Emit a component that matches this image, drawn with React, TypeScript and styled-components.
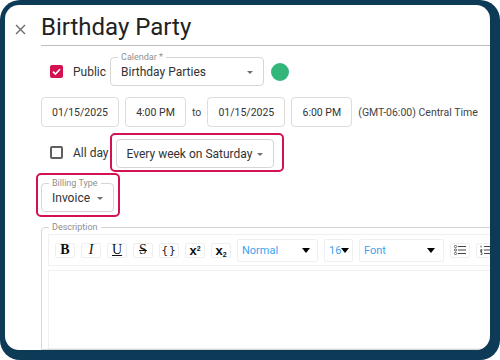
import React from 'react'
import styled, { createGlobalStyle } from 'styled-components'

const GlobalStyle = createGlobalStyle`
  html, body {
    margin: 0;
    padding: 0;
    background: #fff;
  }
  body {
    font-family: Roboto, "Liberation Sans", Arial, sans-serif;
  }
  * {
    box-sizing: border-box;
  }
`

const Frame = styled.div`
  width: 500px;
  height: 360px;
  background: #0d3a57;
  border-radius: 20px;
  padding: 5px 10px 10px 5px;
`

const Panel = styled.div`
  height: 100%;
  background: #fff;
  border-radius: 14px;
  overflow: hidden;
  display: flex;
`

const Side = styled.div`
  width: 36px;
  flex-shrink: 0;
  padding: 18px 0 0 10px;
`

const CloseButton = styled.button`
  display: block;
  width: 11px;
  height: 11px;
  padding: 0;
  border: 0;
  background: none;
  color: #6b6b6b;
  cursor: pointer;
`

const Content = styled.div`
  width: 480px;
  flex-shrink: 0;
  display: flex;
  flex-direction: column;
`

const Title = styled.h1`
  margin: 0;
  padding: 8px 0 4px;
  font-size: 24px;
  line-height: 28px;
  font-weight: 400;
  color: #222;
  border-bottom: 1px solid #bdbdbd;
`

const Row = styled.div<{ $top: number; $gap?: number }>`
  display: flex;
  align-items: center;
  gap: ${p => p.$gap ?? 0}px;
  margin-top: ${p => p.$top}px;
`

const CheckLabel = styled.label`
  display: flex;
  align-items: center;
  gap: 10px;
  padding-left: 9px;
  font-size: 12px;
  color: #333;
`

const Check = styled.span<{ $checked?: boolean }>`
  width: 13px;
  height: 13px;
  border-radius: 2px;
  display: flex;
  align-items: center;
  justify-content: center;
  background: ${p => (p.$checked ? '#d3124f' : '#fff')};
  border: ${p => (p.$checked ? 'none' : '2px solid #5f5f5f')};
`

const Select = styled.div<{ $width: number }>`
  position: relative;
  width: ${p => p.$width}px;
  height: 29px;
  padding: 0 10px;
  border: 1px solid #d6d6d6;
  border-radius: 4px;
  background: #fff;
  display: flex;
  align-items: center;
  justify-content: space-between;
  font-size: 12px;
  color: #333;
  flex-shrink: 0;
`

const FloatLabel = styled.span`
  position: absolute;
  left: 7px;
  top: -7px;
  padding: 0 3px;
  background: #fff;
  font-size: 9px;
  line-height: 12px;
  color: #8f8f8f;
`

const Caret = styled.span`
  width: 0;
  height: 0;
  margin-top: 1px;
  border-left: 3px solid transparent;
  border-right: 3px solid transparent;
  border-top: 3px solid #6f6f6f;
`

const ColorDot = styled.span<{ $color: string }>`
  width: 18px;
  height: 18px;
  margin-left: 7px;
  border-radius: 50%;
  background: ${p => p.$color};
`

const Field = styled.div<{ $width: number }>`
  width: ${p => p.$width}px;
  height: 30px;
  border: 1px solid #dcdcdc;
  border-radius: 4px;
  display: flex;
  align-items: center;
  justify-content: center;
  font-size: 10.5px;
  color: #333;
  flex-shrink: 0;
`

const PlainText = styled.span`
  font-size: 10.5px;
  color: #444;
  white-space: nowrap;
`

const Highlight = styled.div<{ $pad: string; $shift?: number }>`
  padding: ${p => p.$pad};
  margin-left: ${p => p.$shift ?? 0}px;
  border: 2px solid #d3124f;
  border-radius: 5px;
  align-self: flex-start;
`

const Description = styled.div`
  position: relative;
  height: 200px;
  margin-top: 10px;
  padding: 6px 0 0 6px;
  border: 1px solid #d6d6d6;
  border-radius: 4px 0 0 0;
  display: flex;
  flex-direction: column;
`

const Toolbar = styled.div`
  height: 32px;
  padding: 0 6px;
  border: 1px solid #f0f0f0;
  display: flex;
  align-items: center;
  gap: 6px;
`

const ToolButton = styled.span`
  width: 20px;
  height: 15px;
  flex-shrink: 0;
  border: 1px solid #efefef;
  border-radius: 2px;
  background: #fff;
  display: flex;
  align-items: center;
  justify-content: center;
  overflow: hidden;
`

const SerifGlyph = styled.span<{ $bold?: boolean; $italic?: boolean; $line?: string }>`
  font-family: "Liberation Serif", "Times New Roman", serif;
  font-size: 14px;
  line-height: 1;
  color: #111;
  font-weight: ${p => (p.$bold ? 700 : 400)};
  font-style: ${p => (p.$italic ? 'italic' : 'normal')};
  text-decoration: ${p => p.$line ?? 'none'};
  text-decoration-thickness: 1px;
`

const ScriptGlyph = styled.span`
  font-family: "Liberation Sans", Arial, sans-serif;
  font-size: 13px;
  font-weight: 700;
  line-height: 1;
  color: #111;
`

const Small = styled.span<{ $up?: boolean }>`
  font-size: 7px;
  position: relative;
  top: ${p => (p.$up ? -4 : 2)}px;
`

const Braces = styled.span`
  font-family: "DejaVu Sans Mono", monospace;
  font-size: 11px;
  line-height: 1;
  color: #222;
  letter-spacing: 1px;
`

const Dropdown = styled.span<{ $width: number; $padRight: number }>`
  width: ${p => p.$width}px;
  height: 23px;
  flex-shrink: 0;
  padding: 0 ${p => p.$padRight}px 0 4px;
  border: 1px solid #f0f0f0;
  border-radius: 2px;
  display: flex;
  align-items: center;
  justify-content: space-between;
  font-size: 11px;
  color: #3ba3ef;
`

const DropCaret = styled.span`
  width: 0;
  height: 0;
  border-left: 4px solid transparent;
  border-right: 4px solid transparent;
  border-top: 5px solid #000;
`

const Editor = styled.div`
  flex: 1;
  margin-top: 4px;
  border: 1px solid #f0f0f0;
`

const CloseIcon = () => (
  <svg width="11" height="11" viewBox="0 0 11 11">
    <path d="M1 1 L10 10 M10 1 L1 10" stroke="currentColor" strokeWidth="1.4" fill="none" />
  </svg>
)

const CheckMark = () => (
  <svg width="11" height="11" viewBox="0 0 11 11">
    <path d="M2 5.6 L4.4 8 L9 3.2" stroke="#fff" strokeWidth="1.6" fill="none" />
  </svg>
)

const BulletIcon = () => (
  <svg width="12" height="10" viewBox="0 0 12 10">
    <circle cx="1.5" cy="1.5" r="1.1" fill="none" stroke="#444" strokeWidth="0.8" />
    <circle cx="1.5" cy="5" r="1.1" fill="none" stroke="#444" strokeWidth="0.8" />
    <circle cx="1.5" cy="8.5" r="1.1" fill="none" stroke="#444" strokeWidth="0.8" />
    <path d="M4 1.5 H12 M4 5 H12 M4 8.5 H12" stroke="#444" strokeWidth="1" />
  </svg>
)

const NumberIcon = () => (
  <svg width="12" height="10" viewBox="0 0 12 10">
    <path d="M1 0.5 V2.5 M0.5 4.5 H2 V5.5 H0.5 V6.5 H2 M0.5 7.5 H2 V9.5 H0.5" stroke="#444" strokeWidth="0.8" fill="none" />
    <path d="M4 1.5 H12 M4 5 H12 M4 8.5 H12" stroke="#444" strokeWidth="1" />
  </svg>
)

const App = () => {
  return (
    <Frame>
      <GlobalStyle />
      <Panel>
        <Side>
          <CloseButton aria-label="Close">
            <CloseIcon />
          </CloseButton>
        </Side>
        <Content>
          <Title>Birthday Party</Title>

          <Row $top={11}>
            <CheckLabel>
              <Check $checked>
                <CheckMark />
              </Check>
              Public
            </CheckLabel>
            <Select $width={154} style={{ marginLeft: 4 }}>
              <FloatLabel>Calendar *</FloatLabel>
              Birthday Parties
              <Caret />
            </Select>
            <ColorDot $color="#33b679" />
          </Row>

          <Row $top={11} $gap={6}>
            <Field $width={78}>01/15/2025</Field>
            <Field $width={61}>4:00 PM</Field>
            <PlainText>to</PlainText>
            <Field $width={78}>01/15/2025</Field>
            <Field $width={61}>6:00 PM</Field>
            <PlainText>(GMT-06:00) Central Time</PlainText>
          </Row>

          <Row $top={6}>
            <CheckLabel>
              <Check />
              All day
            </CheckLabel>
            <Highlight $pad="4px 8px 2px 4px" $shift={1}>
              <Select $width={158}>
                Every week on Saturday
                <Caret />
              </Select>
            </Highlight>
          </Row>

          <Row $top={1}>
            <Highlight $pad="8px 4px 3px 3px" $shift={-5}>
              <Select $width={73}>
                <FloatLabel>Billing Type</FloatLabel>
                Invoice
                <Caret />
              </Select>
            </Highlight>
          </Row>

          <Description>
            <FloatLabel>Description</FloatLabel>
            <Toolbar>
              <ToolButton><SerifGlyph $bold>B</SerifGlyph></ToolButton>
              <ToolButton><SerifGlyph $italic>I</SerifGlyph></ToolButton>
              <ToolButton><SerifGlyph $line="underline">U</SerifGlyph></ToolButton>
              <ToolButton><SerifGlyph $line="line-through">S</SerifGlyph></ToolButton>
              <ToolButton><Braces>{'{}'}</Braces></ToolButton>
              <ToolButton><ScriptGlyph>x<Small $up>2</Small></ScriptGlyph></ToolButton>
              <ToolButton><ScriptGlyph>x<Small>2</Small></ScriptGlyph></ToolButton>
              <Dropdown $width={81} $padRight={7}>Normal<DropCaret /></Dropdown>
              <Dropdown $width={29} $padRight={3}>16<DropCaret /></Dropdown>
              <Dropdown $width={85} $padRight={8}>Font<DropCaret /></Dropdown>
              <ToolButton><BulletIcon /></ToolButton>
              <ToolButton><NumberIcon /></ToolButton>
            </Toolbar>
            <Editor />
          </Description>
        </Content>
      </Panel>
    </Frame>
  )
}

export default App
